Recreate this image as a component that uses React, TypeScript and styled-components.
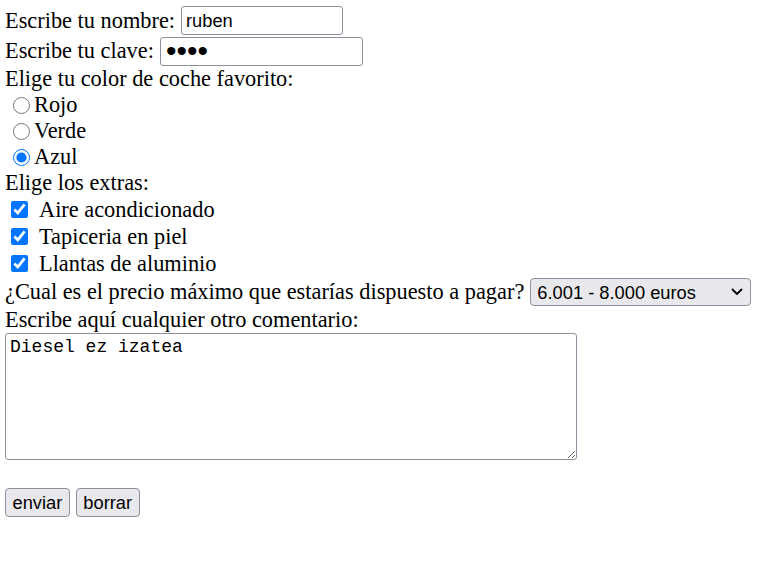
import React from "react";
import styled, { createGlobalStyle } from "styled-components";

const GlobalStyle = createGlobalStyle`
  html, body { background: #ffffff; }
  body {
    margin: 5px;
    font-family: "Liberation Serif", "Times New Roman", serif;
    font-size: 22.35px;
    color: #000000;
  }
`;

const Form = styled.form`
  display: flex;
  flex-direction: column;
`;

const Row = styled.div<{ $h: number }>`
  display: flex;
  align-items: center;
  height: ${(p) => p.$h}px;
  white-space: nowrap;
`;

const TextInput = styled.input<{ $w: number; $secret?: boolean }>`
  box-sizing: border-box;
  width: ${(p) => p.$w}px;
  height: 29px;
  margin: 0 0 0 6px;
  padding: ${(p) => (p.$secret ? "0 4px 0 5px" : "1px 4px")};
  border: 1px solid #8f8f9d;
  border-radius: 3px;
  font-family: "Liberation Sans", Arial, sans-serif;
  font-size: ${(p) => (p.$secret ? "30px" : "18.3px")};
  color: #000;
  background: #fff;
  outline: none;
`;

const Radio = styled.input`
  width: 17px;
  height: 17px;
  margin: 0 4px 0 8px;
  accent-color: #0075ff;
`;

const Check = styled.input`
  width: 17px;
  height: 17px;
  margin: 0 11px 0 6px;
  accent-color: #0075ff;
`;

const SelectWrap = styled.span`
  position: relative;
  display: inline-flex;
  margin-left: 6px;
`;

const Select = styled.select`
  box-sizing: border-box;
  width: 221px;
  height: 28px;
  padding: 0 4px 0 6px;
  border: 1px solid #8f8f9d;
  border-radius: 4px;
  background: #e9e9ed;
  appearance: none;
  -webkit-appearance: none;
  font-family: "Liberation Sans", Arial, sans-serif;
  font-size: 18.3px;
  color: #000;
  outline: none;
`;

const Chevron = styled.svg`
  position: absolute;
  right: 8px;
  top: 10px;
  width: 12px;
  height: 8px;
  pointer-events: none;
`;

const TextArea = styled.textarea`
  box-sizing: border-box;
  width: 572px;
  height: 127px;
  margin: 0;
  padding: 3px 4px;
  border: 1px solid #8f8f9d;
  border-radius: 3px;
  font-family: "Liberation Mono", "Courier New", monospace;
  font-size: 18px;
  color: #000;
  background: #fff;
  outline: none;
`;

const TextAreaRow = styled.div`
  display: flex;
  height: 155px;
`;

const Buttons = styled.div`
  display: flex;
  gap: 6px;
`;

const Button = styled.button`
  box-sizing: border-box;
  height: 29px;
  padding: 0 6.5px;
  border: 1px solid #8f8f9d;
  border-radius: 4px;
  background: #e9e9ed;
  font-family: "Liberation Sans", Arial, sans-serif;
  font-size: 18.3px;
  color: #000;
`;

export default function App() {
  return (
    <>
      <GlobalStyle />
      <Form onSubmit={(e) => e.preventDefault()}>
        <Row $h={31}>
          Escribe tu nombre:
          <TextInput $w={162} type="text" defaultValue="ruben" />
        </Row>
        <Row $h={30}>
          Escribe tu clave:
          <TextInput $w={203} $secret type="password" defaultValue="1234" />
        </Row>
        <Row $h={26}>Elige tu color de coche favorito:</Row>
        <Row $h={26}>
          <Radio type="radio" name="color" />
          Rojo
        </Row>
        <Row $h={26}>
          <Radio type="radio" name="color" />
          Verde
        </Row>
        <Row $h={26}>
          <Radio type="radio" name="color" defaultChecked />
          Azul
        </Row>
        <Row $h={26}>Elige los extras:</Row>
        <Row $h={27}>
          <Check type="checkbox" defaultChecked />
          Aire acondicionado
        </Row>
        <Row $h={27}>
          <Check type="checkbox" defaultChecked />
          Tapiceria en piel
        </Row>
        <Row $h={27}>
          <Check type="checkbox" defaultChecked />
          Llantas de aluminio
        </Row>
        <Row $h={30}>
          ¿Cual es el precio máximo que estarías dispuesto a pagar?
          <SelectWrap>
            <Select defaultValue="3">
              <option value="1">0 - 2.000 euros</option>
              <option value="2">2.001 - 6.000 euros</option>
              <option value="3">6.001 - 8.000 euros</option>
              <option value="4">más de 8.000 euros</option>
            </Select>
            <Chevron viewBox="0 0 12 8">
              <path d="M1.5 1.5 L6 6 L10.5 1.5" fill="none" stroke="#000" strokeWidth="1.8" strokeLinecap="round" strokeLinejoin="round" />
            </Chevron>
          </SelectWrap>
        </Row>
        <Row $h={26}>Escribe aquí cualquier otro comentario:</Row>
        <TextAreaRow>
          <TextArea defaultValue="Diesel ez izatea" />
        </TextAreaRow>
        <Buttons>
          <Button type="submit">enviar</Button>
          <Button type="reset">borrar</Button>
        </Buttons>
      </Form>
    </>
  );
}
